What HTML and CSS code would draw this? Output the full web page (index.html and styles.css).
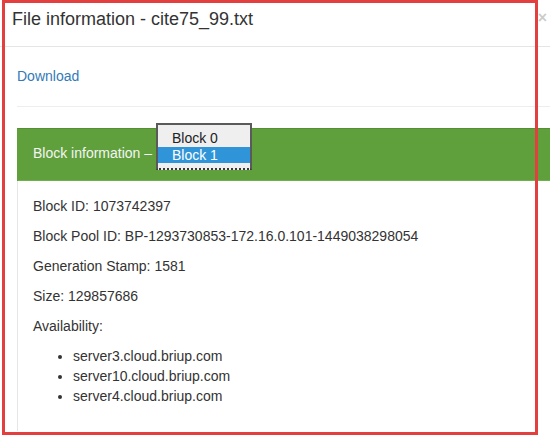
FILE: index.html
```html
<!DOCTYPE html>
<html>
<head>
<meta charset="utf-8">
<link rel="stylesheet" href="styles.css">
</head>
<body>
<div class="modal">
  <div class="modal-header">
    <h4 class="modal-title">File information - cite75_99.txt</h4>
    <span class="close">&times;</span>
  </div>
  <div class="modal-body">
    <div class="download"><a href="#">Download</a></div>
    <hr class="sep">
    <div class="panel">
      <div class="panel-heading">
        <span>Block information &ndash;</span>
        <div class="select-popup">
          <div class="opt">Block 0</div>
          <div class="opt active">Block 1</div>
        </div>
      </div>
      <div class="panel-body">
        <p>Block ID: 1073742397</p>
        <p>Block Pool ID: BP-1293730853-172.16.0.101-1449038298054</p>
        <p>Generation Stamp: 1581</p>
        <p>Size: 129857686</p>
        <p>Availability:</p>
        <ul>
          <li>server3.cloud.briup.com</li>
          <li>server10.cloud.briup.com</li>
          <li>server4.cloud.briup.com</li>
        </ul>
      </div>
    </div>
  </div>
</div>
<div class="annotation"></div>
</body>
</html>
```

FILE: styles.css
```css
* { box-sizing: border-box; }
html, body {
  margin: 0;
  padding: 0;
  background: #fff;
  overflow: hidden;
  width: 550px;
  height: 440px;
}
body {
  font-family: "Liberation Sans", Arial, sans-serif;
  font-size: 14px;
  line-height: 20px;
  color: #333;
  position: relative;
}
.modal {
  width: 560px;
}
.modal-header {
  display: flex;
  align-items: flex-start;
  padding: 6px 0 14px 12px;
  border-bottom: 1px solid #e5e5e5;
  height: 47px;
}
.modal-title {
  margin: 0;
  font-size: 18px;
  font-weight: normal;
  line-height: 26px;
  color: #333;
}
.close {
  margin-left: auto;
  margin-right: 13px;
  font-size: 16px;
  font-weight: bold;
  line-height: 20px;
  color: #000;
  opacity: 0.2;
  padding-top: 2px;
}
.modal-body {
  padding: 19px 0 0 17px;
}
.download a {
  color: #337ab7;
  text-decoration: none;
}
.sep {
  margin: 20px 0 21px 0;
  border: 0;
  border-top: 1px solid #eee;
  height: 0;
}
.panel {
  border: 1px solid #5fa03c;
  border-top-color: #558f35;
  border-bottom: 0;
}
.panel-heading {
  position: relative;
  height: 52px;
  display: flex;
  align-items: center;
  padding: 0 15px 3px 15px;
  background: #5fa03c;
  color: #f4f4f4;
  border-bottom: 1px solid #6fb04c;
}
.select-popup {
  position: absolute;
  left: 138px;
  top: -6px;
  width: 96px;
  height: 47px;
  background: #efefef;
  border: 2px solid #5a5a5a;
  border-bottom: 2px dotted #3a3a3a;
  padding-top: 5px;
  color: #222;
}
.opt {
  height: 17px;
  line-height: 16px;
  padding-left: 14px;
}
.opt.active {
  background: #2f95d8;
  color: #fff;
  height: 16px;
}
.panel-body {
  padding: 15px 15px 15px 15px;
  border-left: 1px solid #e6e6e6;
  margin-left: -1px;
}
.panel-body p {
  margin: 0 0 10px 0;
}
.panel-body ul {
  margin: 0 0 10px 0;
  padding-left: 40px;
}
.annotation {
  position: absolute;
  left: 2px;
  top: 0;
  width: 536px;
  height: 435px;
  border: 3px solid #e33f3f;
  pointer-events: none;
}
```
